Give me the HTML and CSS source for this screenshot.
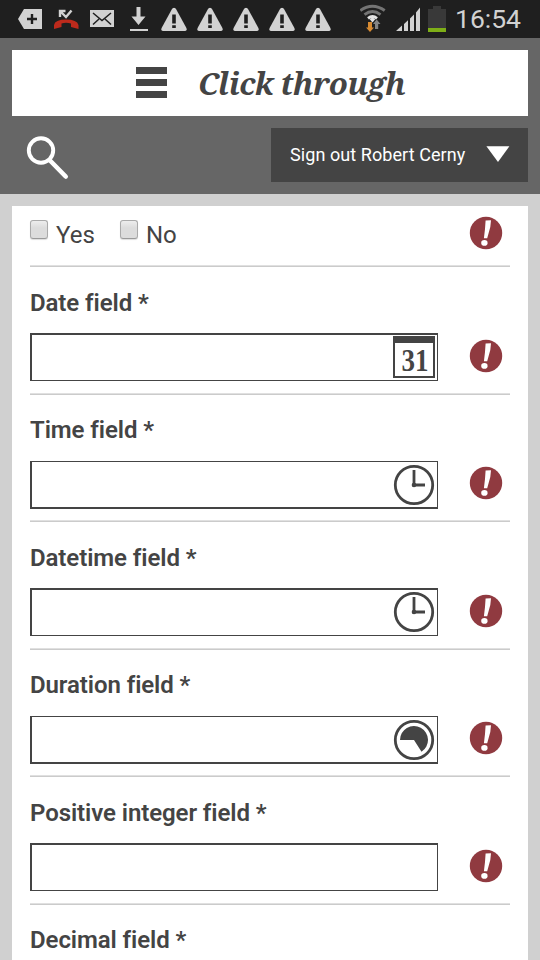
FILE: index.html
```html
<!DOCTYPE html>
<html lang="en">
<head>
<meta charset="utf-8">
<title>Click through</title>
<link rel="stylesheet" href="styles.css">
</head>
<body>
<svg class="defs" aria-hidden="true">
  <symbol id="warn" viewBox="0 0 26 24"><path d="M11 1.5Q13-1.2 15 1.5L25.4 20.500Q26.500 23.500 23.500 23.500H2.500Q-.5 23.500.6 20.500Z" fill="#d2d2d2"/><path d="M11.200 7h3.600v9h-3.600zM11.200 17.800h3.600v2.800h-3.600z" fill="#1f1f1f"/></symbol>
  <symbol id="error" viewBox="0 0 34 34"><circle cx="17" cy="17" r="16.200" fill="#903a40"/><path d="M16.600 4.600 22 4.200 21.300 11 18.200 22.300H14.900L16 13Z" fill="#fff"/><ellipse cx="15.400" cy="26.900" rx="3.200" ry="2.800" fill="#fff"/></symbol>
  <symbol id="clock" viewBox="0 0 42 42"><circle cx="21" cy="21" r="18.700" fill="none" stroke="#444" stroke-width="2.800"/><path d="M21 6v15h11" fill="none" stroke="#444" stroke-width="2.800"/><circle cx="21" cy="21" r="2.300" fill="#444"/></symbol>
</svg>
<div class="status">
  <svg class="notifications" viewBox="0 0 340 38">
    <path d="M18 19 24 9H42V29H24Z" fill="#d2d2d2"/><path d="M32 14v10M27 19h10" stroke="#1f1f1f" stroke-width="2.400"/>
    <path d="M54 29V25Q55 19.500 66 19.500T78.500 25V29L71 27V23.500Q66 22 61.500 23.500V27Z" fill="#bd2a1c"/><path d="M60 17V11H65.500M60.500 11.500 66 17 71.500 10.500" fill="none" stroke="#d2d2d2" stroke-width="2.400"/>
    <path d="M90 10h24v17H90z" fill="#d2d2d2"/><path d="m93 13 9 7.500L111 13M93 24.500l6-5.500M111 24.500l-6-5.500" fill="none" stroke="#1f1f1f" stroke-width="1.500"/>
    <path d="M136.500 7h4v9.500h5L138.500 25l-7-8.500h5zM130 29h18v2h-18z" fill="#d2d2d2"/>
    <use href="#warn" x="161" y="7.500" width="26" height="24"/><use href="#warn" x="197" y="7.500" width="26" height="24"/><use href="#warn" x="233" y="7.500" width="26" height="24"/><use href="#warn" x="269" y="7.500" width="26" height="24"/><use href="#warn" x="305" y="7.500" width="26" height="24"/>
  </svg>
  <svg class="system" viewBox="0 0 90 38">
    <g fill="none" stroke-width="2.900"><path d="M.3 10.500Q12.500 2 24.700 10.500" stroke="#747474"/><path d="M4.500 14.600Q12.500 8.600 20.500 14.600" stroke="#747474"/><path d="M8 18.300Q12.500 14.800 17 18.300" stroke="#e5e5e5"/></g>
    <path d="m9.500 19 3-1.500 3 1.500-3 3.500z" fill="#e5e5e5"/>
    <path d="M8 22h4v5.500h2L10 32l-4-4.500h2z" fill="#d88b32"/><path d="M15 29V24h-2l3.700-4.500L20.500 24h-2.300v5z" fill="#858585"/>
    <path d="M36 31 42 25.500V31zM44 24l4-3.800V31h-4zM50 18.500l4-4V31h-4zM56 12.500l4-5V31h-4z" fill="#d2d2d2"/>
    <path d="M73 6h8v3h5v19H68V9h5z" fill="#393939"/><path d="M68 28h18v4H68z" fill="#7eae17"/>
  </svg>
  <span class="time">16:54</span>
</div>
<header class="header">
  <div class="title-bar">
    <div class="menu"><i></i><i></i><i></i></div>
    <h1>Click through</h1>
  </div>
  <div class="tools">
    <svg class="search" viewBox="0 0 44 46"><circle cx="15" cy="14.500" r="12.200" fill="none" stroke="#fff" stroke-width="3.900"/><path d="m24 24.500 15.700 16" stroke="#fff" stroke-width="4.600" stroke-linecap="round"/></svg>
    <div class="account"><span>Sign out Robert Cerny</span><svg class="arrow" viewBox="0 0 24 16"><path d="M.4.200h23L12 16z" fill="#fff"/></svg></div>
  </div>
</header>
<main class="form">
  <div class="row choices">
    <label class="choice"><i class="check"></i><span>Yes</span></label>
    <label class="choice"><i class="check"></i><span>No</span></label>
    <svg class="error"><use href="#error"/></svg>
  </div>
  <div class="row tall">
    <div class="label">Date field *</div>
    <div class="line"><div class="input heavy-top"><svg class="icon" viewBox="0 0 42 42"><path d="M1 1h40v40H1z" fill="#fff" stroke="#444" stroke-width="2"/><path d="M0 0h42v7H0z" fill="#444"/><text class="day" x="8.500" y="34.500" textLength="27" lengthAdjust="spacingAndGlyphs">31</text></svg></div><svg class="error"><use href="#error"/></svg></div>
  </div>
  <div class="row short">
    <div class="label">Time field *</div>
    <div class="line"><div class="input"><svg class="icon"><use href="#clock"/></svg></div><svg class="error"><use href="#error"/></svg></div>
  </div>
  <div class="row tall">
    <div class="label">Datetime field *</div>
    <div class="line"><div class="input heavy-top"><svg class="icon"><use href="#clock"/></svg></div><svg class="error"><use href="#error"/></svg></div>
  </div>
  <div class="row short">
    <div class="label">Duration field *</div>
    <div class="line"><div class="input"><svg class="icon" viewBox="0 0 42 42"><circle cx="21" cy="21" r="18.700" fill="none" stroke="#444" stroke-width="2.800"/><path d="M21 21H7a14 14 0 1 1 21.500 11.800z" fill="#444"/></svg></div><svg class="error"><use href="#error"/></svg></div>
  </div>
  <div class="row tall">
    <div class="label">Positive integer field *</div>
    <div class="line"><div class="input heavy-top"></div><svg class="error"><use href="#error"/></svg></div>
  </div>
  <div class="row short">
    <div class="label">Decimal field *</div>
  </div>
</main>
</body>
</html>
```
FILE: styles.css
```css
* { box-sizing: border-box; }
html, body { margin: 0; height: 960px; overflow: hidden; }
body { background: #d0d0d0; color: #444; font-family: Roboto, sans-serif; }
svg { display: block; flex: none; }
.defs { display: none; }

.status { height: 38px; display: flex; background: #1f1f1f; color: #d2d2d2; }
.notifications { width: 340px; height: 38px; }
.system { width: 90px; height: 38px; margin-left: 20px; }
.time { margin-left: 5px; font-size: 26.5px; line-height: 37px; white-space: nowrap; }

.header { height: 156px; padding: 12px; background: #666; }
.title-bar { height: 66px; display: flex; background: #fff; padding-left: 124px; }
.menu { width: 31px; padding-top: 16.5px; display: flex; flex-direction: column; gap: 5px; }
.menu i { height: 7px; background: #444; }
h1 { margin: 0 0 0 31px; font: italic bold 31px/66px "Noto Serif", "Droid Serif", "DejaVu Serif", serif; letter-spacing: -0.5px; white-space: nowrap; }
.tools { margin-top: 12px; display: flex; justify-content: space-between; }
.search { width: 44px; height: 46px; margin: 8px 0 0 14px; }
.account { width: 257px; height: 54px; padding: 0 18px 2px; display: flex; align-items: center; justify-content: space-between; background: #444; color: #fff; font-size: 18px; letter-spacing: 0.07px; white-space: nowrap; }
.account span { margin-left: 1px; }
.arrow { width: 24px; height: 16px; }

.form { height: 754px; margin: 12px 12px 0; padding: 0 18px; background: #fff; overflow: hidden; }
.row { background: linear-gradient(#e0e0e0 50%, #cbcbcb 50%) bottom / 100% 2px no-repeat; }
.tall { height: 128px; }
.short { height: 127px; }
.label { height: 66px; padding-top: 21px; font-size: 24px; font-weight: 600; line-height: 28px; letter-spacing: -0.08px; font-variant-ligatures: none; white-space: nowrap; }
.tall .label { padding-top: 22px; }
.line { display: flex; }
.input { width: 408px; height: 48px; display: flex; justify-content: flex-end; border: solid #444; border-width: 1px 1px 2px 2px; padding: 2px 2px 0 0; }
.heavy-top { border-width: 2px 1px 1px 2px; padding-top: 1px; }
.icon { width: 42px; height: 42px; }
.day { font: bold 31px "Liberation Serif", serif; fill: #444; }
.error { width: 34px; height: 34px; margin: 5px 0 0 31px; }
.heavy-top + .error { margin-top: 6px; }
.choices { height: 61px; display: flex; }
.choice { display: flex; width: 90px; font-size: 24px; line-height: 28px; }
.choice span { margin: 15px 0 0 8px; }
.check { width: 18px; height: 19px; margin-top: 14px; border: 1px solid #aaa; border-bottom-color: #999; border-radius: 3px; background: linear-gradient(#ededed, #dcdcdc 40%); box-shadow: 0 1px 1px #ddd; }
.choices .error { margin: 10px 7px 0 auto; }
```
